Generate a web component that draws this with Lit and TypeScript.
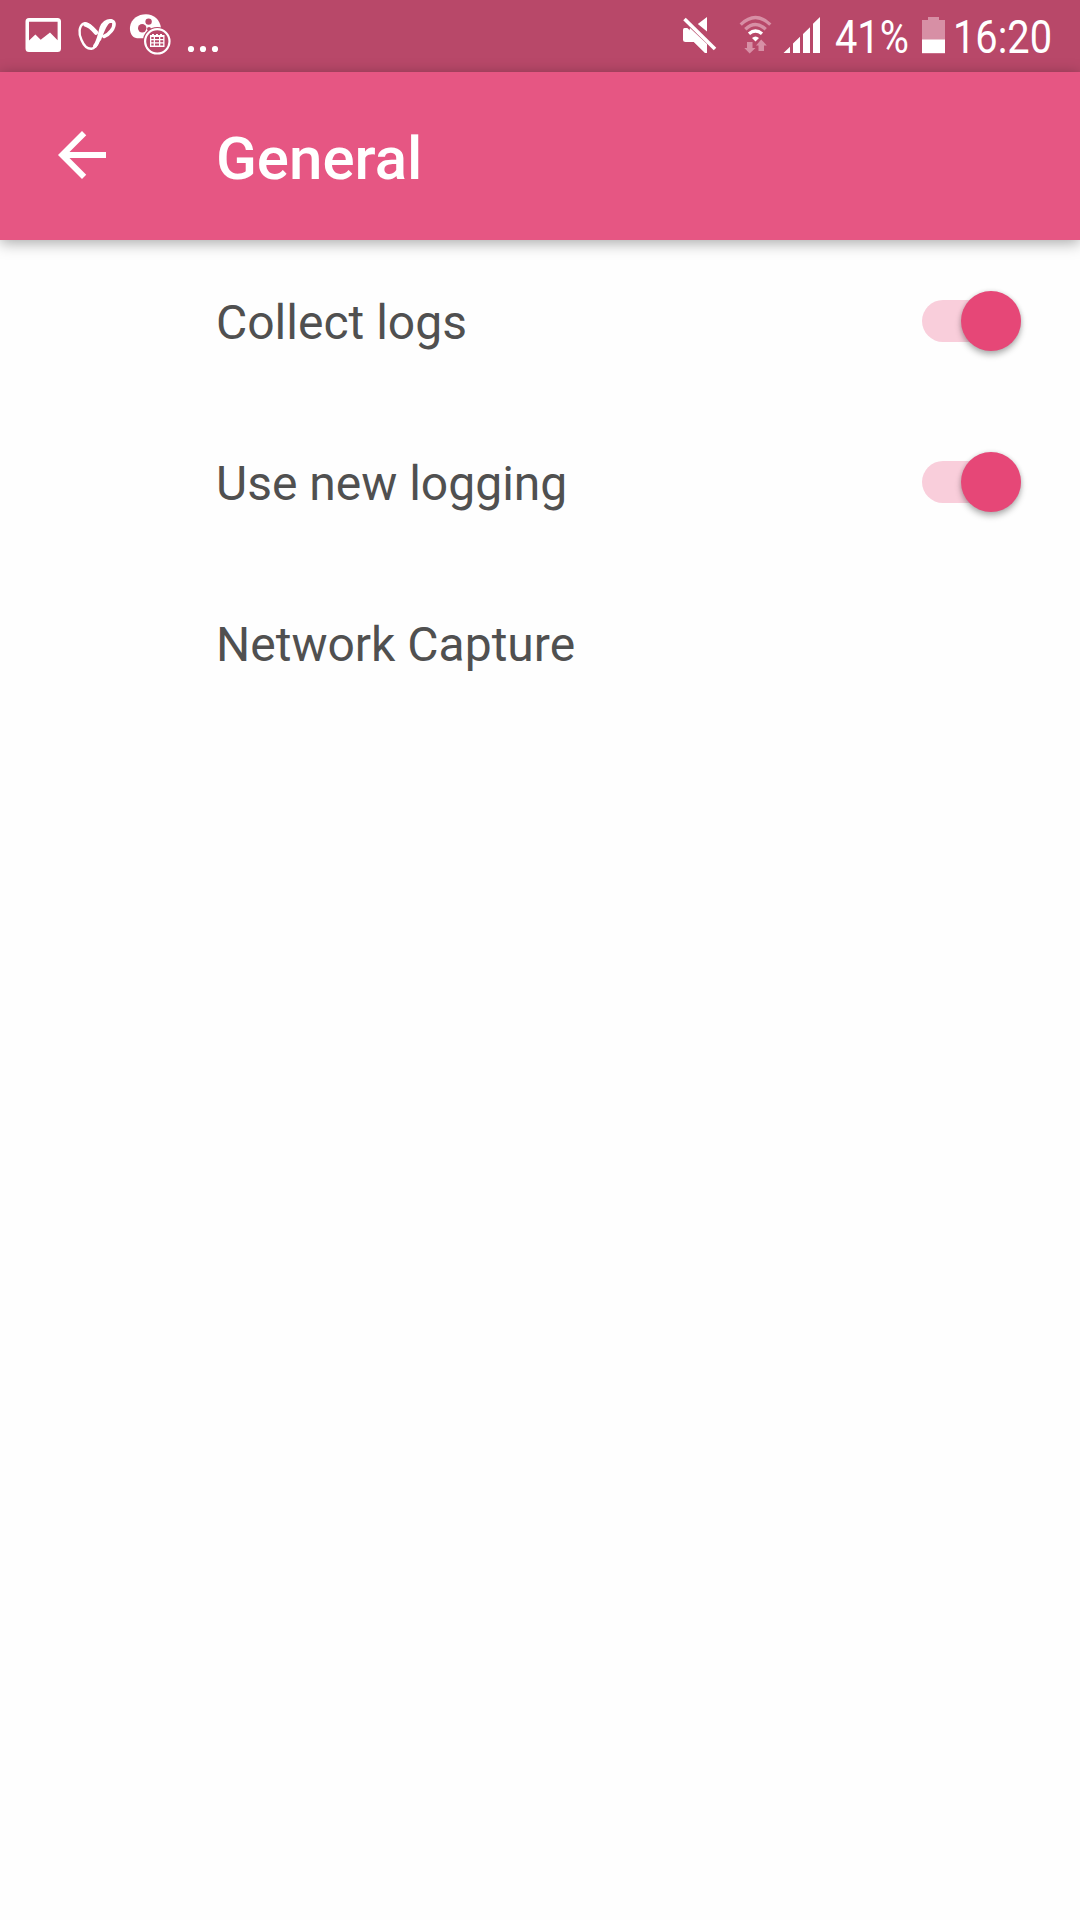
import { LitElement, html, css, svg } from "lit";
import { customElement, property } from "lit/decorators.js";

@customElement("status-bar")
class StatusBar extends LitElement {
  static styles = css`
    :host {
      display: flex;
      justify-content: space-between;
      height: 72px;
      background: #b84869;
      color: #fff;
      font-family: Roboto, "Liberation Sans", sans-serif;
      font-size: 46px;
      line-height: 72px;
    }
    svg {
      display: block;
      flex: none;
    }
    .right {
      display: flex;
      height: 72px;
    }
    .text {
      white-space: nowrap;
      transform: scaleX(0.865);
      transform-origin: 0 0;
      padding-top: 1px;
      box-sizing: border-box;
    }
    .percent {
      width: 81px;
    }
    .clock {
      width: 127px;
    }
  `;

  render() {
    return html`
      <svg class="left" width="230" height="72" viewBox="0 0 230 72" fill="#fff">
        <path fill-rule="evenodd" d="M29 18H57.500a3.500 3.500 0 0 1 3.500 3.500V48.500a3.500 3.500 0 0 1-3.500 3.500H29a3.500 3.500 0 0 1-3.500-3.500V21.500A3.500 3.500 0 0 1 29 18ZM29 21.700V40.500L35.400 34.500L40.700 39.700L50 32.500L57.600 40.300V21.700Z" />
        <g fill="none" stroke="#fff" stroke-linecap="round" stroke-linejoin="round">
          <path stroke-width="2.400" d="M96 33C92 27 87 22 83.500 23.500C79 26 78.300 34 81.500 40C84 46 88 49 91.500 48.800C94.500 48.500 97 45 99 40" />
          <path stroke-width="4.500" d="M85.500 24.500C89 25 93 29 96 32.500" />
          <path stroke-width="4" d="M95 46C98.500 42 99.500 35 101.500 28C103 23.500 107 20.500 111 21" />
          <path stroke-width="3.600" d="M104 36.500C109.500 34.500 114.500 28 114 23.500C113.500 20.500 110 20 107 23C103.500 27 102 33 99.500 39" />
        </g>
        <path d="M137 38.300C131.500 37.500 129.500 32 130 27C131 19 138 14.300 146 14.300C154 14.300 160 20 161 28L150 38.300Z" />
        <g fill="#b84869">
          <circle cx="148.600" cy="21.600" r="3.200" />
          <circle cx="142.200" cy="28.300" r="4.200" />
          <circle cx="149" cy="29" r="2" />
          <circle cx="157.300" cy="41.300" r="14.400" />
        </g>
        <circle cx="157.300" cy="41.300" r="12.200" fill="none" stroke="#fff" stroke-width="2.200" />
        <path fill-rule="evenodd" d="M150 35H152V34H154V35H156V34H158V35H160V34H162V35H164.500V47H150ZM151.300 37V39H153.700V37ZM155 37V39H159V37ZM160.300 37V39H163.200V37ZM151.300 40.200V42.200H153.700V40.200ZM155 40.200V42.200H159V40.200ZM160.300 40.200V42.200H163.200V40.200ZM151.300 43.400V45.600H153.700V43.400ZM155 43.400V45.600H159V43.400ZM160.300 43.400V45.600H163.200V43.400Z" />
        <circle cx="191" cy="49" r="3.100" />
        <circle cx="203" cy="49" r="3.100" />
        <circle cx="215" cy="49" r="3.100" />
      </svg>
      <div class="right">
        <svg width="160" height="72" viewBox="676 0 160 72" fill="#fff">
          <path d="M708 17V31.500L698.800 24ZM685.500 28H691L708 45V53H706L695 42H686.500Q684 42 684 40V30Q684 28 685.500 28Z" />
          <path d="M684 19.500L715.500 49.500" stroke="#b84869" stroke-width="6.500" />
          <path d="M691 28L708 44V53H706.500L695 42H688Z" />
          <path d="M685.500 19L716 49" stroke="#fff" stroke-width="3.600" />
          <g fill="none" stroke-width="3.300">
            <path stroke="#d78fa5" d="M741.700 24.600Q756.500 10.500 771.300 24.600M746.300 29.300Q756.500 19.600 766.700 29.300" />
            <path stroke="#fff" d="M750 33.800Q756.500 28.200 763 33.800" />
          </g>
          <path d="M753 38Q756.500 35 760 38L756.500 41.500Z" />
          <path fill="#d78fa5" d="M748 42H753.500V48H756.500L750.700 53.500L745.300 48H748ZM762.200 39.500L767.800 45.500H765V51H759.500V45.500H757Z" />
          <path d="M784.500 53L791 46.800V53ZM794 53V43.500L801 36.800V53ZM804 53V34L811 27.200V53ZM814 53V23.700L821 17V53Z" />
        </svg>
        <div class="text percent">41%</div>
        <svg width="37" height="72" viewBox="911 0 37 72" class="battery">
          <path fill="#d78fa5" d="M917 20H923V17H934V20H940V53.500H917Z" />
          <path fill="#fff" d="M917 39.500H940V53H917Z" />
        </svg>
        <div class="text clock">16:20</div>
      </div>
    `;
  }
}

@customElement("app-toolbar")
class AppToolbar extends LitElement {
  static styles = css`
    :host {
      display: flex;
      align-items: center;
      box-sizing: border-box;
      height: 168px;
      padding-left: 46px;
      background: #e65683;
      color: #fff;
      box-shadow: 0 3px 14px rgba(0, 0, 0, 0.34);
      font-family: Roboto, "Liberation Sans", sans-serif;
    }
    .back {
      width: 72px;
      height: 72px;
      margin: 0 98px 2px 0;
      fill: #fff;
    }
    .title {
      margin: 0;
      padding-top: 5px;
      font-size: 60px;
      line-height: 72px;
      font-weight: 500;
    }
  `;
  @property() heading = "";

  render() {
    return html`
      <svg class="back" viewBox="0 0 24 24">
        <path d="M20 11H7.830l5.590-5.590L12 4l-8 8 8 8 1.410-1.410L7.830 13H20v-2z" />
      </svg>
      <h1 class="title">${this.heading}</h1>
    `;
  }
}

@customElement("setting-row")
class SettingRow extends LitElement {
  static styles = css`
    :host {
      display: flex;
      align-items: center;
      justify-content: space-between;
      box-sizing: border-box;
      height: 161px;
      padding: 0 59px 0 216px;
      color: #505050;
      font-family: Roboto, "Liberation Sans", sans-serif;
      font-size: 48px;
      line-height: 56px;
    }
    .label {
      padding-top: 4px;
    }
    .switch {
      display: flex;
      align-items: center;
      justify-content: flex-end;
      box-sizing: border-box;
      width: 83px;
      height: 42px;
      margin-right: 0;
      border-radius: 21px;
      background: #f9cedb;
    }
    .thumb {
      flex: none;
      width: 60px;
      height: 60px;
      margin-right: 0;
      border-radius: 50%;
      background: #e64777;
      box-shadow: 0 4px 6px rgba(0, 0, 0, 0.28), 0 0 4px rgba(0, 0, 0, 0.12);
    }
    .control {
      display: flex;
      width: 99px;
    }
    .switch {
      width: 99px;
    }
  `;
  @property() label = "";
  @property({ type: Boolean }) toggle = false;

  render() {
    return html`
      <span class="label">${this.label}</span>
      ${this.toggle
        ? html`<div class="control"><div class="switch"><div class="thumb"></div></div></div>`
        : ""}
    `;
  }
}

@customElement("app-root")
class AppRoot extends LitElement {
  static styles = css`
    :host {
      display: flex;
      flex-direction: column;
      min-height: 1920px;
      background: #fefefe;
    }
  `;

  render() {
    return html`
      <status-bar></status-bar>
      <app-toolbar heading="General"></app-toolbar>
      <setting-row label="Collect logs" toggle></setting-row>
      <setting-row label="Use new logging" toggle></setting-row>
      <setting-row label="Network Capture"></setting-row>
    `;
  }
}
